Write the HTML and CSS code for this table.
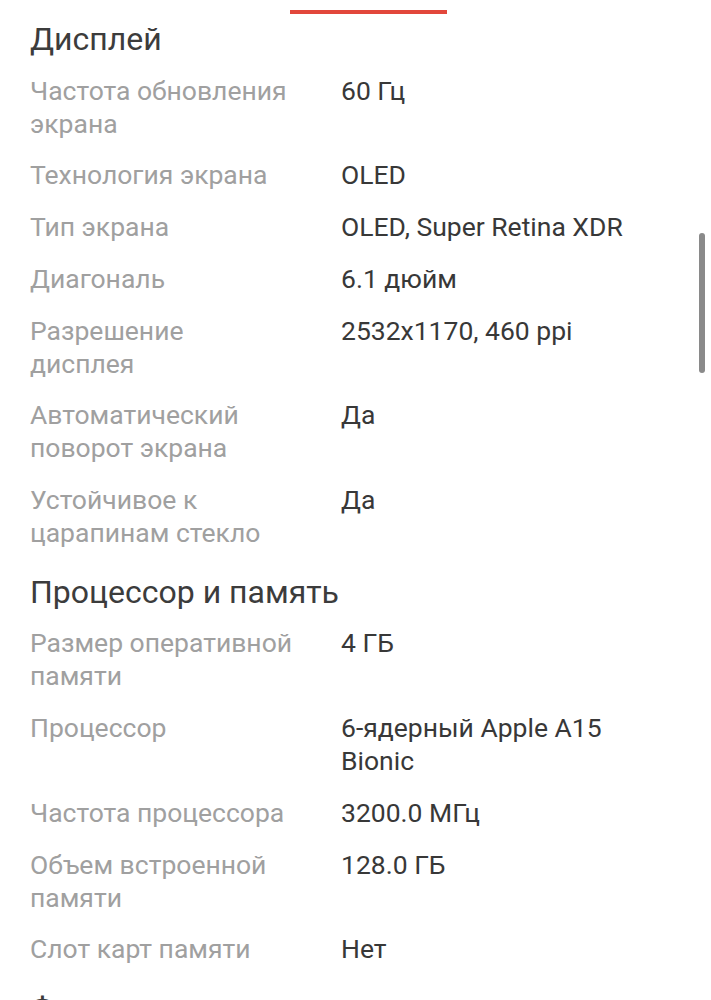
FILE: index.html
```html
<!DOCTYPE html>
<html lang="ru">
<head>
<meta charset="utf-8">
<title>Характеристики</title>
<link rel="stylesheet" href="styles.css">
</head>
<body>
<div class="page">
  <div class="tabbar"><span class="tab-indicator"></span></div>

  <section class="section">
    <h2 class="section-title">Дисплей</h2>
    <div class="rows">
      <div class="row"><div class="label">Частота обновления экрана</div><div class="value">60 Гц</div></div>
      <div class="row"><div class="label">Технология экрана</div><div class="value">OLED</div></div>
      <div class="row"><div class="label">Тип экрана</div><div class="value">OLED, Super Retina XDR</div></div>
      <div class="row"><div class="label">Диагональ</div><div class="value">6.1 дюйм</div></div>
      <div class="row"><div class="label">Разрешение дисплея</div><div class="value">2532x1170, 460 ppi</div></div>
      <div class="row"><div class="label">Автоматический поворот экрана</div><div class="value">Да</div></div>
      <div class="row"><div class="label">Устойчивое к царапинам стекло</div><div class="value">Да</div></div>
    </div>
  </section>

  <section class="section">
    <h2 class="section-title">Процессор и память</h2>
    <div class="rows">
      <div class="row"><div class="label">Размер оперативной памяти</div><div class="value">4 ГБ</div></div>
      <div class="row"><div class="label">Процессор</div><div class="value">6-ядерный Apple A15 Bionic</div></div>
      <div class="row"><div class="label">Частота процессора</div><div class="value">3200.0 МГц</div></div>
      <div class="row"><div class="label">Объем встроенной памяти</div><div class="value">128.0 ГБ</div></div>
      <div class="row"><div class="label">Слот карт памяти</div><div class="value">Нет</div></div>
    </div>
  </section>

  <section class="section">
    <h2 class="section-title">Фотокамера</h2>
  </section>

  <div class="scrollbar"></div>
</div>
</body>
</html>
```

FILE: styles.css
```css
html, body {
  margin: 0;
  padding: 0;
  background: #ffffff;
}

body {
  font-family: Roboto, "Noto Sans", "Liberation Sans", sans-serif;
  color: #3a3a3a;
  overflow: hidden;
  height: 1000px;
}

.page {
  position: relative;
  padding: 0 60px 0 30px;
}

.tabbar {
  display: flex;
  padding-top: 10px;
  height: 9px;
  padding-left: 260px;
}

.tab-indicator {
  display: block;
  width: 157px;
  height: 4px;
  background: #e2473b;
}

.section {
  display: flex;
  flex-direction: column;
}

.section + .section {
  margin-top: 22.5px;
}

.section-title {
  margin: 0 0 14.5px;
  font-size: 32px;
  line-height: 40px;
  font-weight: 400;
  color: #3c3c3c;
}

.rows {
  display: flex;
  flex-direction: column;
  gap: 18.8px;
}

.row {
  display: grid;
  grid-template-columns: 262.5px 1fr;
  column-gap: 48.5px;
  font-size: 26.5px;
  line-height: 33px;
}

.label {
  color: #a0a0a0;
}

.value {
  color: #383838;
}

.scrollbar {
  position: absolute;
  top: 233px;
  right: 6px;
  width: 6px;
  height: 140px;
  border-radius: 3px;
  background: #8a8a8a;
}
```
